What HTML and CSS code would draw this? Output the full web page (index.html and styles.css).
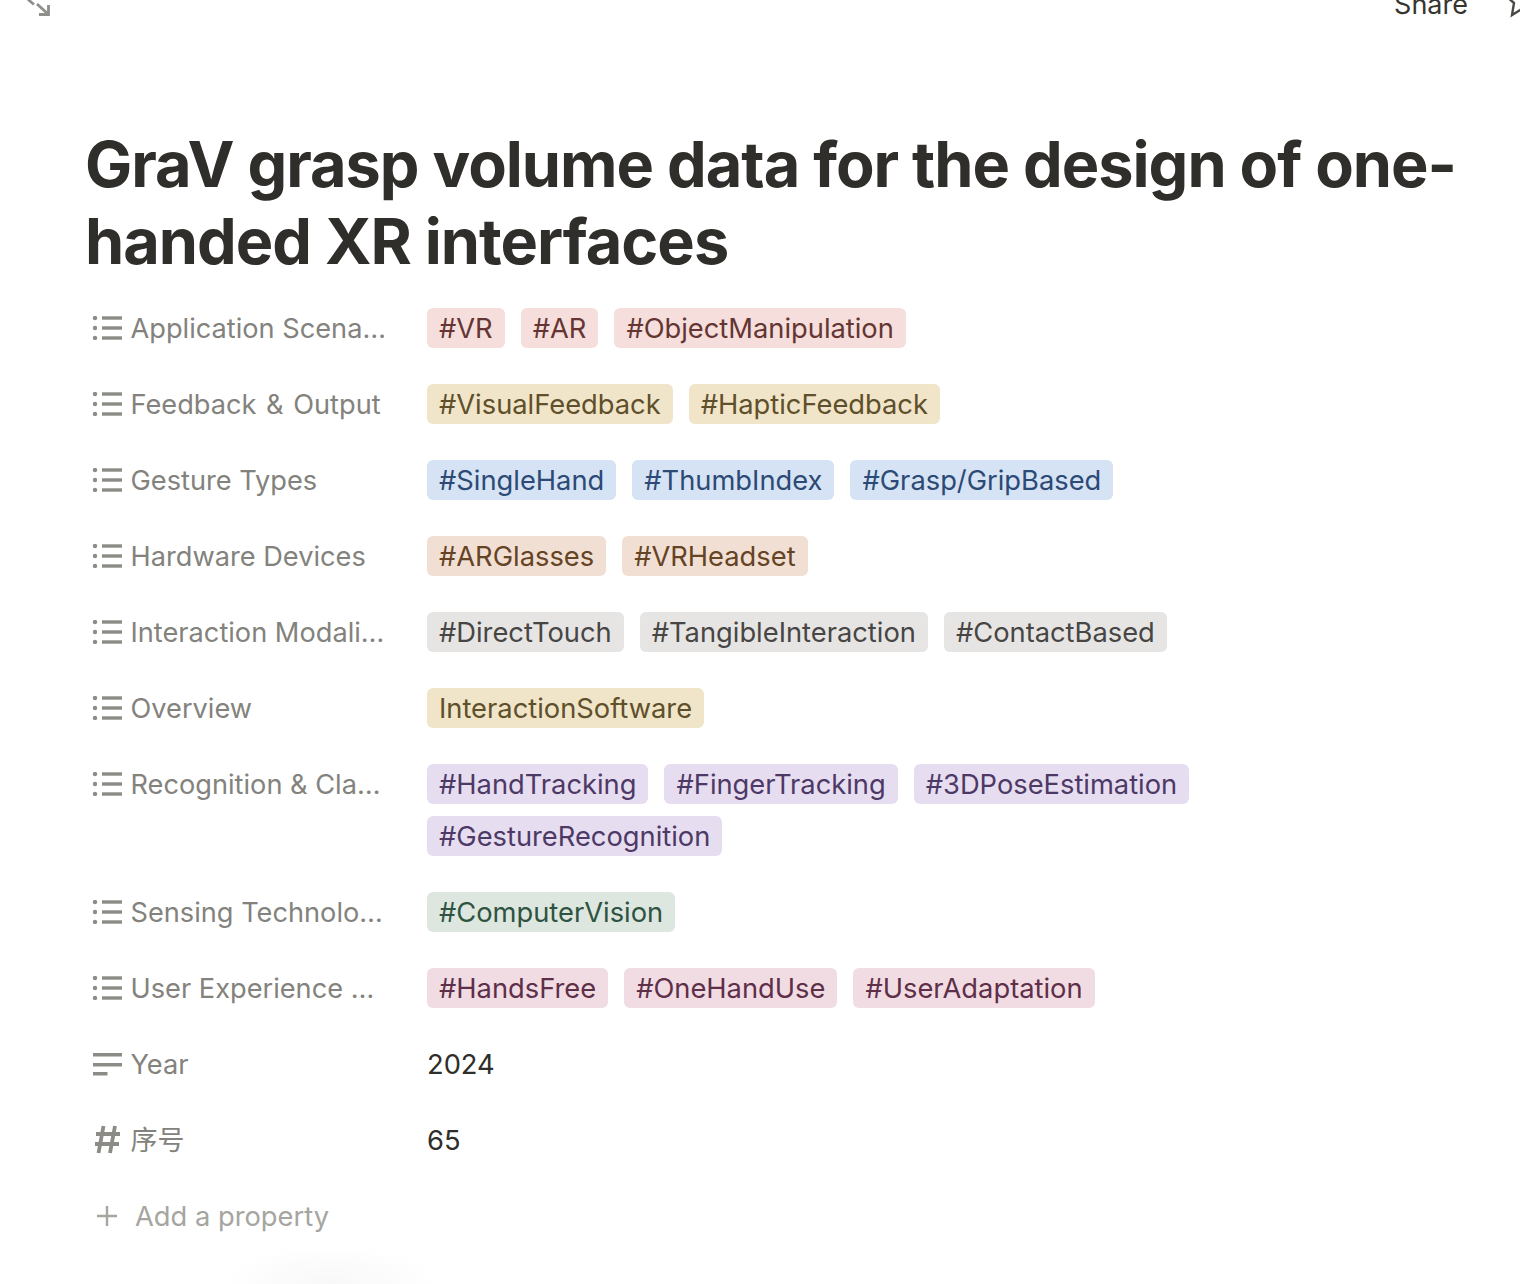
FILE: index.html
```html
<!DOCTYPE html>
<html lang="en">
<head>
<meta charset="utf-8">
<title>GraV grasp volume data</title>
<link rel="stylesheet" href="styles.css">
</head>
<body>
<div class="page">
  <header class="topbar">
    <svg class="expand" viewBox="0 0 24 24" width="24" height="24" fill="none" stroke="#8f8e8a" stroke-width="2.800"><path d="M1 3.500 L7 8.500"/><path d="M10 8 L21 18"/><path d="M21.500 9 V18.500 H12"/></svg>
    <div class="actions">
      <span class="share">Share</span>
      <svg class="star" viewBox="0 0 30 30" width="30" height="30" fill="none" stroke="#4a4944" stroke-width="2.400"><path d="M2 -1 L10 6 L8 18 L17 12.500"/></svg>
    </div>
  </header>
  <h1 class="title">GraV grasp volume data for the design of one-handed XR interfaces</h1>
  <section class="props">
    <div class="row"><div class="label"><svg class="ic" viewBox="0 0 30 24"><use href="#list"/></svg><span>Application Scena…</span></div><div class="val"><span class="tag red">#VR</span><span class="tag red">#AR</span><span class="tag red">#ObjectManipulation</span></div></div>
    <div class="row"><div class="label"><svg class="ic" viewBox="0 0 30 24"><use href="#list"/></svg><span class="amp">Feedback &amp; Output</span></div><div class="val"><span class="tag yellow">#VisualFeedback</span><span class="tag yellow">#HapticFeedback</span></div></div>
    <div class="row"><div class="label"><svg class="ic" viewBox="0 0 30 24"><use href="#list"/></svg><span>Gesture Types</span></div><div class="val"><span class="tag blue">#SingleHand</span><span class="tag blue">#ThumbIndex</span><span class="tag blue">#Grasp/GripBased</span></div></div>
    <div class="row"><div class="label"><svg class="ic" viewBox="0 0 30 24"><use href="#list"/></svg><span>Hardware Devices</span></div><div class="val"><span class="tag brown">#ARGlasses</span><span class="tag brown">#VRHeadset</span></div></div>
    <div class="row"><div class="label"><svg class="ic" viewBox="0 0 30 24"><use href="#list"/></svg><span>Interaction Modali…</span></div><div class="val"><span class="tag gray">#DirectTouch</span><span class="tag gray">#TangibleInteraction</span><span class="tag gray">#ContactBased</span></div></div>
    <div class="row"><div class="label"><svg class="ic" viewBox="0 0 30 24"><use href="#list"/></svg><span>Overview</span></div><div class="val"><span class="tag yellow">InteractionSoftware</span></div></div>
    <div class="row"><div class="label"><svg class="ic" viewBox="0 0 30 24"><use href="#list"/></svg><span>Recognition &amp; Cla…</span></div><div class="val"><span class="tag purple">#HandTracking</span><span class="tag purple">#FingerTracking</span><span class="tag purple">#3DPoseEstimation</span><span class="tag purple">#GestureRecognition</span></div></div>
    <div class="row"><div class="label"><svg class="ic" viewBox="0 0 30 24"><use href="#list"/></svg><span>Sensing Technolo…</span></div><div class="val"><span class="tag green">#ComputerVision</span></div></div>
    <div class="row"><div class="label"><svg class="ic" viewBox="0 0 30 24"><use href="#list"/></svg><span>User Experience …</span></div><div class="val"><span class="tag pink">#HandsFree</span><span class="tag pink">#OneHandUse</span><span class="tag pink">#UserAdaptation</span></div></div>
    <div class="row"><div class="label"><svg class="ic" viewBox="0 0 30 24"><path d="M1 1h29v3.500H1zM1 11h29v3.500H1zM1 20h14.500v3.500H1z" fill="#8c8b86"/></svg><span>Year</span></div><div class="val"><span class="plain">2024</span></div></div>
    <div class="row"><div class="label"><svg class="ic hash" viewBox="0 0 30 30"><path d="M11.500 1 L6.500 28 M23 1 L18 28 M4 9 H28 M3 19 H27" stroke="#8c8b86" stroke-width="3.800" fill="none"/></svg><span class="cjk">序号</span></div><div class="val"><span class="plain">65</span></div></div>
    <div class="add"><svg class="plus" viewBox="0 0 24 24"><path d="M12 2V22M2 12H22" stroke="#a6a59f" stroke-width="2.400"/></svg><span>Add a property</span></div>
  </section>
  <div class="smudge"></div>
</div>
<svg class="defs" width="0" height="0"><defs><g id="list" fill="#8c8b86"><circle cx="3" cy="2" r="2.200"/><circle cx="3" cy="12" r="2.200"/><circle cx="3" cy="22" r="2.200"/><rect x="10" y="0.300" width="20" height="3.400"/><rect x="10" y="10.300" width="20" height="3.400"/><rect x="10" y="20.300" width="20" height="3.400"/></g></defs></svg>
</body>
</html>
```
FILE: styles.css
```css
* { box-sizing: border-box; }
html, body { margin: 0; padding: 0; background: #fff; }
body {
  font-family: Inter, "Noto Sans CJK SC", sans-serif;
  color: #2f2e2a;
  overflow: hidden;
  height: 1284px;
}
.page { position: relative; width: 1520px; height: 1284px; overflow: hidden; }
.topbar {
  height: 40px;
  margin-top: -16px;
  padding: 0 0 0 27px;
  display: flex;
  align-items: center;
  justify-content: space-between;
}
.expand { flex: none; margin-top: 8px; }
.actions { display: flex; align-items: center; gap: 36px; margin-right: -14px; }
.share { font-size: 27px; line-height: 40px; color: #37352f; margin-top: 2px; }
.star { flex: none; align-self: flex-start; margin-top: 16px; }
.title {
  margin: 102px 0 0;
  padding: 0 50px 0 85px;
  font-size: 63px;
  line-height: 77px;
  font-weight: 700;
  letter-spacing: -1px;
  color: #2f2e2a;
}
.props { margin: 10px 0 0; padding: 0 0 0 92px; }
.row { display: flex; padding: 18px 0; }
.label {
  width: 335px;
  flex: none;
  display: flex;
  align-items: center;
  gap: 8.5px;
  height: 40px;
  font-size: 27.2px;
  color: #83827d;
}
.ic { width: 30px; height: 24px; flex: none; }
.hash { height: 30px; }
.cjk { font-size: 27px; margin-bottom: 4px; }
.amp { word-spacing: 2px; }
.val { display: flex; flex-wrap: wrap; gap: 12px 16px; width: 800px; }
.tag {
  height: 40px;
  padding: 0 12px;
  border-radius: 6px;
  font-size: 27.3px;
  line-height: 42px;
  white-space: nowrap;
}
.plain { display: block; height: 40px; font-size: 27.3px; line-height: 42px; color: #2f2e2a; }
.red { background: #f5dedc; color: #643532; }
.yellow { background: #f0e5c8; color: #5f4f2b; }
.blue { background: #d5e3f4; color: #2c4a75; }
.brown { background: #f2dfd3; color: #654325; }
.gray { background: #e6e5e3; color: #474644; }
.purple { background: #e7ddf0; color: #4d3966; }
.green { background: #dde7e0; color: #2e5441; }
.pink { background: #f2dce4; color: #5e2f48; }
.add {
  display: flex;
  align-items: center;
  gap: 16px;
  height: 40px;
  margin-top: 18px;
  padding-left: 3px;
  font-size: 27.3px;
  color: #a6a59f;
}
.plus { width: 24px; height: 24px; flex: none; }
.smudge {
  position: absolute;
  left: 220px;
  bottom: -40px;
  width: 220px;
  height: 80px;
  background: radial-gradient(ellipse at center, #f8f8f8 0%, rgba(255,255,255,0) 70%);
}
.defs { position: absolute; }
```
